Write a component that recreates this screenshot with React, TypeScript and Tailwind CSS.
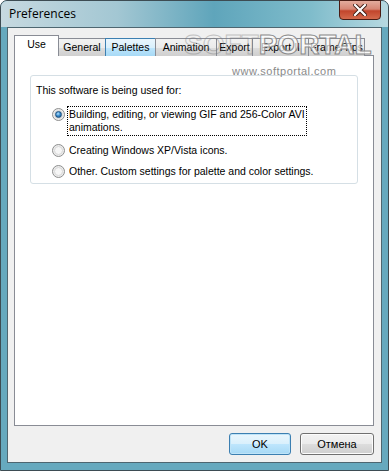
import React from "react";

const UI_FONT = "font-['Liberation_Sans',Arial,sans-serif]";

const TABS = [
  { name: "Use", w: "w-[45px]", active: true },
  { name: "General", w: "w-[48px]" },
  { name: "Palettes", w: "w-[51px]", hover: true },
  { name: "Animation", w: "w-[62px]" },
  { name: "Export", w: "w-[37px]" },
  { name: "Export II", w: "w-[57px]" },
  { name: "Frame/Tips", w: "w-[57px]" },
];

function Radio({ checked }: { checked?: boolean }) {
  return (
    <span className="relative flex h-[13px] w-[13px] shrink-0 items-center justify-center rounded-full border border-[#8e8f8f] bg-[#ececec]">
      <span className="h-[9px] w-[9px] rounded-full border border-[#d8d8d8] bg-[#f6f6f6]" />
      {checked && (
        <span className="absolute h-[7px] w-[7px] rounded-full border border-[#1b4e7c] bg-[radial-gradient(circle_at_40%_35%,#b9e3ff_0%,#3c8fcf_45%,#0d4b86_100%)]" />
      )}
    </span>
  );
}

function Button({ label, isDefault }: { label: string; isDefault?: boolean }) {
  return (
    <button
      className={`h-[22px] rounded-[3px] border text-[11px] text-black ${
        isDefault
          ? "w-[62px] border-[#3c7fb1] bg-[linear-gradient(#eaf6fd_0%,#d9f0fc_50%,#bee6fd_50%,#a7d9f5_100%)] shadow-[inset_0_0_0_1px_#bfe4f8]"
          : "w-[74px] border-[#707070] bg-[linear-gradient(#f2f2f2_0%,#ebebeb_50%,#dddddd_50%,#cfcfcf_100%)] shadow-[inset_0_0_0_1px_#fcfcfc]"
      }`}
    >
      {label}
    </button>
  );
}

export default function App() {
  return (
    <div className={`relative h-[471px] w-[389px] overflow-hidden ${UI_FONT}`}>
      <div className="flex h-full w-full flex-col rounded-t-[7px] border border-[#3d4c53] bg-[#66a9be]">
        {/* Title bar */}
        <div className="flex h-[26px] shrink-0 items-start justify-between rounded-t-[6px] bg-[linear-gradient(to_right,#c6d9e0_0%,#a3c7d3_30%,#5fa5bb_55%,#7fbccb_80%,#b7d9e1_100%)] pl-[8px] pr-[7px]">
          <span className="mt-[6px] font-['Open_Sans','Noto_Sans',sans-serif] text-[12px] leading-[14px] text-black">
            Preferences
          </span>
          <button className="mt-[-1px] flex h-[20px] w-[42px] items-center justify-center rounded-b-[4px] border border-[#4a1c14] bg-[linear-gradient(#e3ab9d_0%,#d68674_45%,#c2452c_55%,#d46a4c_100%)]">
            <svg width="14" height="12" viewBox="0 0 14 12">
              <path d="M2 1 L12 11 M12 1 L2 11" stroke="#3c1a12" strokeWidth="4" strokeLinecap="square" />
              <path d="M2 1 L12 11 M12 1 L2 11" stroke="#ffffff" strokeWidth="2.2" strokeLinecap="square" />
            </svg>
          </button>
        </div>

        {/* Frame sides + client area */}
        <div className="flex flex-1 flex-col px-[6px] pb-[7px]">
          <div className="flex flex-1 flex-col border border-[#4e6670] bg-[#f0f0f0] pl-[6px] pr-[7px] pt-[8px]">
            {/* Tabs */}
            <div className="relative z-10 flex h-[20px] items-end">
              {TABS.map((t, i) => (
                <div
                  key={t.name}
                  className={`flex shrink-0 items-center justify-center text-[10.5px] text-black ${t.w} ${
                    i > 0 ? "-ml-px" : ""
                  } ${
                    t.active
                      ? "relative z-10 h-[21px] border border-b-0 border-[#898c95] bg-white pb-[3px]"
                      : t.hover
                      ? "h-[18px] border border-b-0 border-[#3c7fb1] bg-[linear-gradient(#eaf6fd_0%,#d9f0fc_50%,#bee6fd_50%,#a7d9f5_100%)]"
                      : "h-[18px] border border-b-0 border-[#898c95] bg-[linear-gradient(#f2f2f2_0%,#ebebeb_50%,#dddddd_50%,#cfcfcf_100%)]"
                  }`}
                >
                  {t.name}
                </div>
              ))}
            </div>

            {/* Tab panel */}
            <div className="-mt-px h-[371px] border border-[#898c95] bg-white px-[15px] pt-[19px]">
              <div className="h-[109px] rounded-[3px] border border-[#d5dfe5] pl-[5px] pt-[8px] text-[10.5px] leading-[13px] text-black">
                <div>This software is being used for:</div>
                <div className="mt-[9px] flex items-start pl-[16px]">
                  <span className="mt-[2px]">
                    <Radio checked />
                  </span>
                  <span className="ml-[2px] border border-dotted border-black px-[1px] py-[1px]">
                    Building, editing, or viewing GIF and 256-Color AVI
                    <br />
                    animations.
                  </span>
                </div>
                <div className="mt-[8px] flex items-center pl-[16px]">
                  <Radio />
                  <span className="ml-[4px]">Creating Windows XP/Vista icons.</span>
                </div>
                <div className="mt-[8px] flex items-center pl-[16px]">
                  <Radio />
                  <span className="ml-[4px]">Other. Custom settings for palette and color settings.</span>
                </div>
              </div>
            </div>

            {/* Buttons */}
            <div className="mt-[7px] flex justify-end gap-[9px]">
              <Button label="OK" isDefault />
              <Button label="Отмена" />
            </div>
          </div>
        </div>
      </div>

      {/* Watermark */}
      <div className="pointer-events-none absolute left-[184px] top-[30px] z-20 flex items-end">
        <span className="text-[28px] font-bold leading-[30px] text-transparent opacity-40 [-webkit-text-stroke:1px_#7a7a7a]">
          SOFT
        </span>
        <span className="text-[28px] font-bold leading-[30px] text-white/70 [-webkit-text-stroke:1px_#8a8a8a]">
          PORTAL
        </span>
      </div>
      <div className="pointer-events-none absolute left-[232px] top-[63px] z-20 text-[11px] tracking-[0.5px] text-[#8a8a8a]">
        www.softportal.com
      </div>
    </div>
  );
}
